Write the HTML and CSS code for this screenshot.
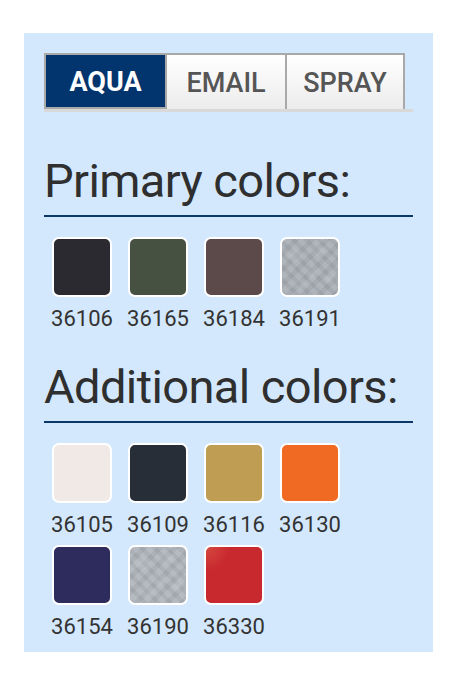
FILE: index.html
```html
<!DOCTYPE html>
<html lang="en">
<head>
<meta charset="utf-8">
<title>Colors</title>
<link rel="stylesheet" href="styles.css">
</head>
<body>
<div class="panel">
  <div class="tabs">
    <div class="tab tab-active">AQUA</div>
    <div class="tab">EMAIL</div>
    <div class="tab tab-last">SPRAY</div>
  </div>

  <section class="group group-primary">
    <h2 class="group-title">Primary colors:</h2>
    <div class="swatches">
      <div class="item"><div class="swatch c36106"></div><span class="code">36106</span></div>
      <div class="item"><div class="swatch c36165"></div><span class="code">36165</span></div>
      <div class="item"><div class="swatch c36184"></div><span class="code">36184</span></div>
      <div class="item"><div class="swatch c36191 textured"></div><span class="code">36191</span></div>
    </div>
  </section>

  <section class="group group-additional">
    <h2 class="group-title">Additional colors:</h2>
    <div class="swatches">
      <div class="item"><div class="swatch c36105"></div><span class="code">36105</span></div>
      <div class="item"><div class="swatch c36109"></div><span class="code">36109</span></div>
      <div class="item"><div class="swatch c36116"></div><span class="code">36116</span></div>
      <div class="item"><div class="swatch c36130"></div><span class="code">36130</span></div>
      <div class="item"><div class="swatch c36154"></div><span class="code">36154</span></div>
      <div class="item"><div class="swatch c36190 textured"></div><span class="code">36190</span></div>
      <div class="item"><div class="swatch c36330"></div><span class="code">36330</span></div>
    </div>
  </section>
</div>
</body>
</html>
```

FILE: styles.css
```css
* { box-sizing: border-box; }

html, body {
  margin: 0;
  padding: 0;
  background: #ffffff;
}

body {
  font-family: Roboto, "Liberation Sans", sans-serif;
  color: #333333;
}

.panel {
  margin: 33px 0 0 24px;
  width: 409px;
  background: #d3e8fd;
  padding: 20px 20px 12px 20px;
}

.tabs {
  display: flex;
  border-bottom: 3px solid #d9d9d9;
  width: 369px;
}

.tab {
  width: 120px;
  height: 56px;
  border: 2px solid #a9a9a9;
  border-right: none;
  border-bottom: none;
  background: linear-gradient(#ffffff, #ececec);
  color: #555555;
  font-size: 27px;
  font-weight: 500;
  display: flex;
  align-items: center;
  justify-content: center;
  padding-top: 2px;
}

.tab-active {
  width: 121px;
  background: #02346d;
  color: #ffffff;
  font-weight: 700;
  border-bottom: 2px solid #a9a9a9;
}

.tab-last {
  border-right: 2px solid #a9a9a9;
}

.group-title {
  margin: 0;
  font-size: 47px;
  line-height: 56px;
  font-weight: 400;
  letter-spacing: -0.6px;
  color: #2f2f2f;
  padding-bottom: 6px;
  border-bottom: 2px solid #0b3768;
}

.group-primary { margin-top: 41px; }
.group-additional { margin-top: 27px; }

.swatches {
  display: flex;
  flex-wrap: wrap;
  column-gap: 16px;
  row-gap: 7px;
  padding-left: 8px;
  margin-top: 20px;
}

.item {
  width: 60px;
  display: flex;
  flex-direction: column;
  align-items: center;
}

.swatch {
  width: 60px;
  height: 60px;
  border: 2px solid #ffffff;
  border-radius: 7px;
}

.code {
  margin-top: 9px;
  font-size: 22px;
  line-height: 26px;
  white-space: nowrap;
  color: #333333;
}

.c36106 { background-color: #2b2a30; }
.c36165 { background-color: #465142; }
.c36184 { background-color: #5c4a4b; }
.c36105 { background-color: #f1e9e6; }
.c36109 { background-color: #272e37; }
.c36116 { background-color: #bf9e54; }
.c36130 { background-color: #f06a24; }
.c36154 { background-color: #2e2b5d; }
.c36330 {
  background-color: #c8292f;
  background-image: radial-gradient(circle at 0% 0%, rgba(230,110,80,0.45), rgba(255,255,255,0) 30%);
}

.textured {
  background-color: #aaafb6;
  background-image:
    radial-gradient(circle at 22% 30%, rgba(255,255,255,0.16), rgba(255,255,255,0) 14%),
    radial-gradient(circle at 68% 22%, rgba(255,255,255,0.14), rgba(255,255,255,0) 12%),
    radial-gradient(circle at 55% 62%, rgba(255,255,255,0.16), rgba(255,255,255,0) 13%),
    radial-gradient(circle at 86% 70%, rgba(255,255,255,0.18), rgba(255,255,255,0) 10%),
    radial-gradient(circle at 35% 82%, rgba(255,255,255,0.12), rgba(255,255,255,0) 12%),
    repeating-linear-gradient(45deg, rgba(0,0,0,0.04) 0 4px, rgba(255,255,255,0.04) 4px 9px),
    repeating-linear-gradient(-45deg, rgba(0,0,0,0.04) 0 5px, rgba(255,255,255,0.04) 5px 11px);
}

.c36190 { background-color: #b0b5bc; }
```
